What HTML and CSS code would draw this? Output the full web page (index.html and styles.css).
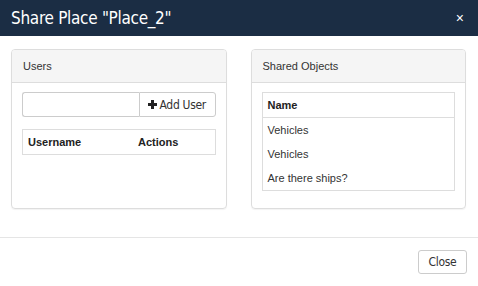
FILE: index.html
```html
<!DOCTYPE html>
<html>

<head>
	<title>Share Place</title>
	<meta name="viewport" content="width=device-width, initial-scale=1">
	<link rel="stylesheet" href="styles.css">
</head>

<body>
	<div class="modal">
		<div class="modal-header">
			<h4 class="modal-title">Share Place "Place_2"</h4>
			<span class="close">&times;</span>
		</div>

		<div class="modal-body">
			<div class="panel">
				<div class="panel-heading">Users</div>
				<div class="panel-body">
					<div class="input-group">
						<input type="text" class="form-control">
						<button class="btn add-user">
							<svg width="9" height="9" viewBox="0 0 9 9">
								<path d="M3 0h3v3h3v3H6v3H3V6H0V3h3z" fill="#222"/>
							</svg>
							Add User
						</button>
					</div>
					<table class="table">
						<thead>
							<tr>
								<th class="col-user">Username</th>
								<th>Actions</th>
							</tr>
						</thead>
					</table>
				</div>
			</div>

			<div class="panel">
				<div class="panel-heading">Shared Objects</div>
				<div class="panel-body">
					<table class="table objects">
						<thead>
							<tr>
								<th>Name</th>
							</tr>
						</thead>
						<tbody>
							<tr><td>Vehicles</td></tr>
							<tr><td>Vehicles</td></tr>
							<tr><td>Are there ships?</td></tr>
						</tbody>
					</table>
				</div>
			</div>
		</div>

		<div class="modal-footer">
			<button class="btn">Close</button>
		</div>
	</div>
</body>

</html>
```

FILE: styles.css
```css
body {
	margin: 0;
	font-family: 'Liberation Sans', Arial, sans-serif;
	font-size: 11px;
	color: #333;
	background: #fff;
}

.modal {
	width: 478px;
}

.modal-header {
	height: 36px;
	background-color: #1b2d44;
	display: flex;
	align-items: center;
	justify-content: space-between;
	padding: 0 11px;
	box-sizing: border-box;
}

.modal-title {
	margin: 0;
	color: #fff;
	font-family: 'DejaVu Sans Condensed', 'Roboto', sans-serif;
	font-weight: normal;
	font-size: 17px;
	letter-spacing: -0.3px;
}

.close {
	color: #fff;
	font-size: 14px;
	line-height: 1;
	margin-right: 3px;
}

.modal-body {
	display: flex;
	gap: 24px;
	padding: 13px 12px 28px 11px;
}

.panel {
	flex: 1;
	border: 1px solid #ddd;
	border-radius: 4px;
	box-shadow: 0 1px 1px rgba(0, 0, 0, 0.05);
}

.panel-heading {
	height: 32px;
	line-height: 32px;
	padding: 0 11px;
	background-color: #f5f5f5;
	border-bottom: 1px solid #ddd;
	border-radius: 3px 3px 0 0;
}

.panel-body {
	padding: 9px 10px 17px 10px;
}

.input-group {
	display: flex;
	height: 25px;
	margin-bottom: 12px;
}

.form-control {
	width: 117px;
	height: 25px;
	box-sizing: border-box;
	border: 1px solid #ccc;
	border-right: none;
	border-radius: 3px 0 0 3px;
	margin: 0;
	padding: 0 6px;
}

.btn {
	font-family: 'DejaVu Sans Condensed', 'Roboto', sans-serif;
	font-size: 12px;
	color: #333;
	background: #fff;
	border: 1px solid #ccc;
	border-radius: 3px;
	padding: 0 9px;
	height: 25px;
	letter-spacing: -0.3px;
}

.add-user {
	flex: 1;
	border-radius: 0 3px 3px 0;
	display: flex;
	align-items: center;
	justify-content: center;
	gap: 2px;
	padding: 0;
}

.table {
	width: 100%;
	border-collapse: collapse;
	border: 1px solid #ddd;
}

.table th {
	text-align: left;
	font-weight: bold;
	color: #222;
	height: 24px;
	padding: 0 5px;
}

.table thead tr {
	border-bottom: 1px solid #ddd;
}

.col-user {
	width: 100px;
}

.objects td {
	height: 24px;
	padding: 0 5px;
}

.modal-footer {
	border-top: 1px solid #e5e5e5;
	display: flex;
	justify-content: flex-end;
	padding: 12px 11px 0 0;
}

.modal-footer .btn {
	width: 49px;
	height: 24px;
	padding: 0;
}
```
